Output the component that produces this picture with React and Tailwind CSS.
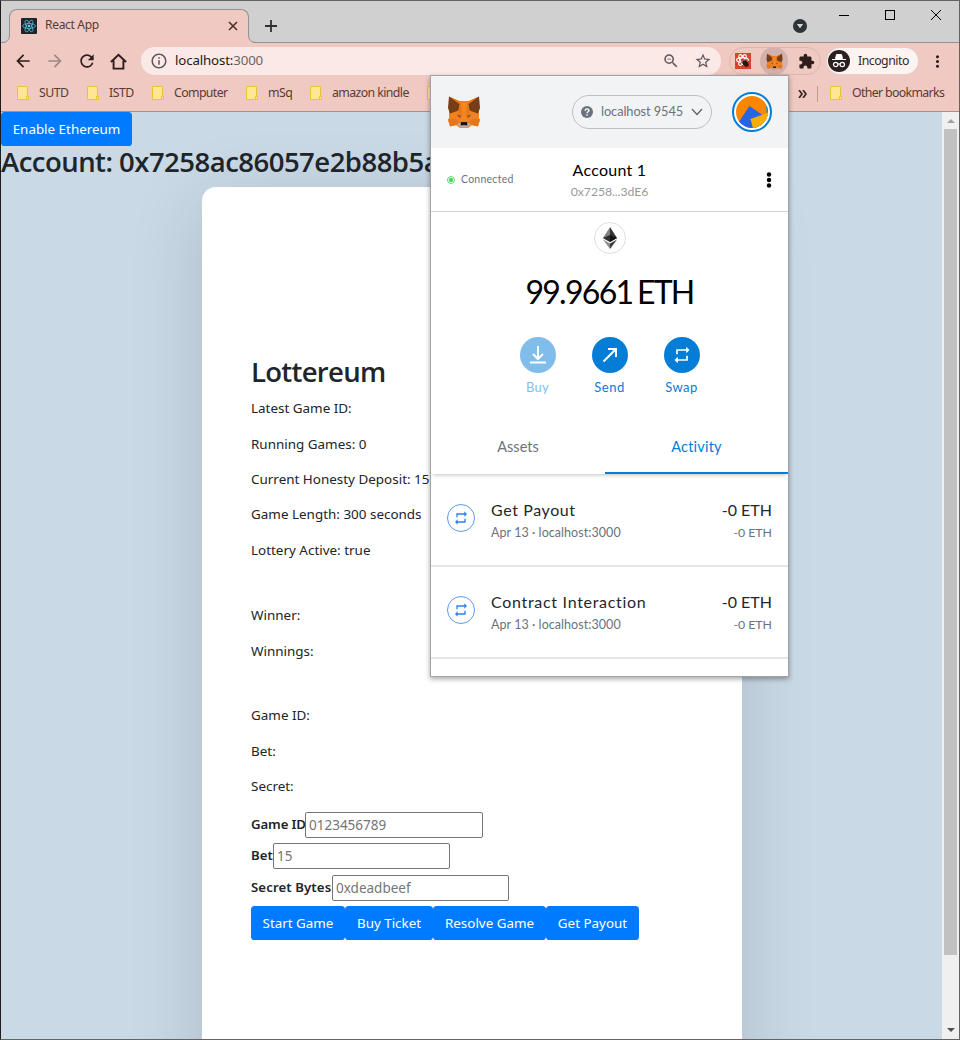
import React from "react";
import {
  MdArrowBack, MdArrowForward, MdRefresh, MdInfoOutline,
  MdZoomOut, MdStarBorder, MdExtension, MdMoreVert, MdRepeat,
} from "react-icons/md";

const Fox = ({ className }) => (
  <svg viewBox="0 0 34 32" className={className}>
    <path fill="#f08223" d="M2 13L11 5h12l9 8v9l1 2-2 6-6-1-4 3h-8l-4-3-6 1-2-6 1-2z" />
    <path fill="#763d16" d="M2 .5L13 6l-1.500 8.500L3 17.500 1 12z" />
    <path fill="#763d16" d="M32 .5L21 6l1.500 8.500L31 17.500l2-5.500z" />
    <path fill="#e4761b" d="M2 .5L13.500 5.500h7L32 .5 21 8.500l2 7-3 5h-6l-3-5 2-7z" />
    <path fill="#f6851b" d="M13.500 5.500h7l-1 9-.5 11h-4l-.5-11z" />
    <path fill="#e4761b" d="M1 23h8l3 3-2 3-7 1.500zM33 23h-8l-3 3 2 3 7 1.500z" />
    <path fill="#cd6116" d="M9 18l5 1.500-1 3zM25 18L20 19.500l1 3z" />
    <path fill="#c0ad9e" d="M10 28l4-1.500h6l4 1.500-4 3.500h-6z" />
    <path fill="#161616" d="M14 26h6l.5 3.200h-7z" />
    <path fill="#5a4a48" d="M10.500 19l3 1-.5 1.500zM23.500 19l-3 1 .5 1.500z" />
  </svg>
);

const Atom = ({ className }) => (
  <svg viewBox="0 0 16 16" className={className}>
    <rect width="16" height="16" rx="1" fill="#20232a" />
    <g fill="none" stroke="#53b9d3" strokeWidth=".8">
      <ellipse cx="8" cy="8" rx="6.5" ry="2.5" />
      <ellipse cx="8" cy="8" rx="6.5" ry="2.5" transform="rotate(60 8 8)" />
      <ellipse cx="8" cy="8" rx="6.5" ry="2.5" transform="rotate(120 8 8)" />
    </g>
    <circle cx="8" cy="8" r="1.3" fill="#61dafb" />
  </svg>
);

const DevTools = () => (
  <svg viewBox="0 0 16 16" className="size-4">
    <rect width="16" height="16" fill="#d8432f" />
    <g fill="none" stroke="#fff" strokeWidth="1.1">
      <ellipse cx="7.5" cy="7" rx="6" ry="2.4" />
      <ellipse cx="7.5" cy="7" rx="6" ry="2.4" transform="rotate(60 7.5 7)" />
      <ellipse cx="7.5" cy="7" rx="6" ry="2.4" transform="rotate(120 7.5 7)" />
    </g>
    <ellipse cx="10.5" cy="10.5" rx="2.6" ry="3.4" fill="#2b1512" transform="rotate(-35 10.5 10.5)" />
    <path d="M6 9l8 4M7 13l7-5M10 6l2 8" stroke="#2b1512" strokeWidth=".8" />
  </svg>
);

const Folder = () => (
  <svg viewBox="0 0 13 15" className="h-[15px] w-[13px] shrink-0">
    <path d="M1.500 .5h10v10h1v3h-11z" fill="#ffe694" stroke="#e9c535" />
    <path d="M10.500 13.500v-3h2" fill="none" stroke="#e9c535" />
  </svg>
);

const Bookmark = ({ label, className, text = "ml-[9px]" }) => (
  <div className={`flex shrink-0 items-center ${className}`}>
    <Folder />
    <span className={`text-[12.3px] whitespace-nowrap ${text}`}>{label}</span>
  </div>
);

const Browser = () => (
  <>
    <div className="flex h-[42px] shrink-0 items-end bg-[#d0d0d0] pl-2 shadow-[inset_0_-1px_0_#959191]">
      <div className="relative flex h-[34px] w-[240px] items-center rounded-t-lg border border-b-0 border-[#959191] bg-[#efc9c2] pr-[10px] pb-[2px] pl-[11px]">
        <Atom className="size-4" />
        <span className="ml-2 flex-1 text-[12.1px] tracking-[-0.350px] text-[#5c3a34]">React App</span>
        <svg viewBox="0 0 10 10" className="size-[10px]"><path d="M1 1l8 8M9 1L1 9" stroke="#4d2f2b" strokeWidth="1.6" /></svg>
        <svg viewBox="0 0 8 8" className="absolute bottom-0 -left-[8px] size-2"><path d="M8 0v8H0q7.500 0 7.500-8" fill="#efc9c2" /><path d="M0 7.500q7.500 0 7.500-7.500" fill="none" stroke="#959191" /></svg>
        <svg viewBox="0 0 8 8" className="absolute -right-[8px] bottom-0 size-2"><path d="M0 0v8h8Q.5 8 .5 0" fill="#efc9c2" /><path d="M8 7.500Q.5 7.500 .5 0" fill="none" stroke="#959191" /></svg>
      </div>
      <svg viewBox="0 0 12 12" className="mb-[11px] ml-4 size-3"><path d="M6 0v12M0 6h12" stroke="#2c3033" strokeWidth="1.800" /></svg>
      <div className="flex-1" />
      <svg viewBox="0 0 14 14" className="mr-[32px] mb-[10px] size-[14px]"><circle cx="7" cy="7" r="7" fill="#2f3438" /><path d="M3.800 5h6.400L7 9.300z" fill="#d8d8d8" /></svg>
      <div className="mr-[18px] flex items-center gap-[36px] pb-[23px]">
        <svg viewBox="0 0 10 10" className="size-[10px]"><path d="M0 5.500h10" stroke="#000" /></svg>
        <svg viewBox="0 0 10 10" className="size-[10px]"><rect x=".5" y=".5" width="9" height="9" fill="none" stroke="#000" /></svg>
        <svg viewBox="0 0 10 10" className="size-[10px]"><path d="M0 0l10 10M10 0L0 10" stroke="#000" /></svg>
      </div>
    </div>
    <div className="flex h-9 shrink-0 items-center bg-[#efc9c2] pr-[11px] pl-3 text-[#2e1d1b]">
      <MdArrowBack className="size-[20px] shrink-0" />
      <MdArrowForward className="ml-[12px] size-[20px] shrink-0 text-[#a18884]" />
      <MdRefresh className="ml-[12px] size-[20px] shrink-0" />
      <svg viewBox="0 0 18 18" className="mr-[3px] ml-[13px] size-[17px] shrink-0"><path d="M1 9.500L9 1.800l8 7.700M3.800 8v8.500h10.400V8" fill="none" stroke="#2e1d1b" strokeWidth="2" /></svg>
      <div className="ml-[11px] flex h-7 w-[580px] shrink-0 items-center rounded-full bg-[#fae9e6] pr-[9px] pl-[9px] text-[#5f5655]">
        <MdInfoOutline className="size-[18px]" />
        <span className="ml-[7px] flex-1 text-[13.300px] tracking-[-0.150px] text-[#6c6462]"><span className="text-[#231918]">localhost:</span>3000</span>
        <MdZoomOut className="size-[18px]" />
        <MdStarBorder className="ml-[14px] size-[18px]" />
      </div>
      <div className="ml-2 flex h-7 w-[92px] shrink-0 items-center rounded-full border border-[#dcb7b1] pl-[5px]">
        <DevTools />
        <span className="ml-[9px] flex size-7 items-center justify-center rounded-full bg-[#d2b1ac]"><Fox className="size-[17px]" /></span>
        <MdExtension className="ml-[10px] size-[17px] text-[#2e1d1b]" />
      </div>
      <div className="ml-[6px] flex h-[26px] w-[91px] shrink-0 items-center rounded-full bg-[#fdf4f2] pl-[1px] ring-1 ring-[#e5cfcb]">
        <svg viewBox="0 0 22 22" className="size-[22px]">
          <circle cx="11" cy="11" r="11" fill="#29201f" />
          <path d="M7.500 8.500l1-4h5l1 4zM4 9.500h14" fill="#fff" stroke="#fff" strokeWidth="1" />
          <g fill="none" stroke="#fff" strokeWidth="1.200"><circle cx="7.700" cy="14.500" r="2.200" /><circle cx="14.300" cy="14.500" r="2.200" /><path d="M9.900 14h2.200" /></g>
        </svg>
        <span className="ml-[8px] text-[12.300px] tracking-[-0.500px] text-[#382725]">Incognito</span>
      </div>
      <MdMoreVert className="ml-[10px] size-[19px] shrink-0" />
    </div>
    <div className="flex h-[33px] shrink-0 items-center border-b border-[#a98f8a] bg-[#efc9c2] pb-[3px] pl-[15px] text-[#5c3a34]">
      <Bookmark label="SUTD" className="w-[70px]" text="ml-[10px] tracking-[-0.500px]" />
      <Bookmark label="ISTD" className="w-[65px]" text="ml-[10px] tracking-[-0.500px]" />
      <Bookmark label="Computer" className="w-[94px]" text="ml-[10px] tracking-[-0.600px]" />
      <Bookmark label="mSq" className="w-[64px]" text="ml-[10px] tracking-[-0.500px]" />
      <Bookmark label="amazon kindle" className="w-[117px]" text="ml-[10px] tracking-[-0.580px]" />
      <Folder />
      <div className="flex-1" />
      <svg viewBox="0 0 9 8" className="h-2 w-[9px]"><path d="M1 0l3 4-3 4M5 0l3 4-3 4" fill="none" stroke="#3b2522" strokeWidth="1.700" /></svg>
      <div className="mr-[11px] ml-[10px] h-4 w-px bg-[#bd9a94]" />
      <Bookmark label="Other bookmarks" className="w-[130px]" text="ml-[10px] tracking-[-0.640px]" />
    </div>
  </>
);

const Button = ({ children, className }) => (
  <button className={`h-[34px] rounded-[3.600px] bg-[#007bff] text-center text-[13.400px] whitespace-nowrap text-white ${className}`}>{children}</button>
);
const Line = ({ children, className = "mb-[14px]" }) => (
  <p className={`h-[21.400px] text-[13.450px] leading-[21.400px] whitespace-nowrap ${className}`}>{children}</p>
);
const Field = ({ label, hint, width, box = "w-[177px]" }) => (
  <div className="flex h-[31.500px] items-center">
    <label className={`text-[13.200px] font-semibold whitespace-nowrap ${width}`}>{label}</label>
    <input placeholder={hint} className={`h-[26px] rounded-[2px] border border-[#767676] bg-white px-[3px] text-[13.500px] placeholder:text-[#757575] ${box}`} />
  </div>
);

const Page = () => (
  <div className="flex min-h-0 flex-1">
    <main className="flex min-w-0 flex-1 flex-col items-start overflow-hidden bg-[#c9d9e6] text-[#212529]">
      <Button className="w-[131px] shrink-0">Enable Ethereum</Button>
      <h2 className="mb-[6px] h-[35px] shrink-0 font-['Open_Sans',sans-serif] text-[27.500px] leading-[32px] font-semibold tracking-[-0.520px] whitespace-nowrap">Account: 0x7258ac86057e2b88b5a</h2>
      <section className="ml-[201px] h-[1000px] w-[540px] shrink-0 rounded-[14px] bg-white px-[49px] pt-[168px] shadow-[0_14px_76px_rgba(0,0,0,0.14)]">
        <h2 className="mb-[9.300px] h-[34px] font-['Open_Sans',sans-serif] text-[27.500px] leading-[33px] font-semibold tracking-[-0.700px]">Lottereum</h2>
        <Line>Latest Game ID:</Line>
        <Line>Running Games: 0</Line>
        <Line>Current Honesty Deposit: 15</Line>
        <Line>Game Length: 300 seconds</Line>
        <Line>Lottery Active: true</Line>
        <Line className="mt-[43.900px] mb-[14px]">Winner:</Line>
        <Line>Winnings:</Line>
        <Line className="mt-[43.500px] mb-[14px]">Game ID:</Line>
        <Line>Bet:</Line>
        <Line className="mb-[11.300px]">Secret:</Line>
        <Field label="Game ID" hint="0123456789" width="w-[54px] tracking-[-0.100px]" box="w-[178px]" />
        <Field label="Bet" hint="15" width="w-[22px]" />
        <Field label="Secret Bytes" hint="0xdeadbeef" width="w-[81px] tracking-[0.100px]" />
        <div className="mt-[3px] flex">
          <Button className="w-[94px]">Start Game</Button>
          <Button className="w-[88px]">Buy Ticket</Button>
          <Button className="w-[113px]">Resolve Game</Button>
          <Button className="w-[93px]">Get Payout</Button>
        </div>
      </section>
    </main>
    <div className="flex w-[17px] shrink-0 flex-col items-center bg-[#f0f0f0]">
      <svg viewBox="0 0 17 17" className="size-[17px] shrink-0"><path d="M5 11h8L9 7z" fill="#a3a3a3" /></svg>
      <div className="h-[826px] w-[13px] bg-[#c1c1c1]" />
      <div className="flex-1" />
      <svg viewBox="0 0 17 17" className="size-[17px] shrink-0"><path d="M5 6h8l-4 4z" fill="#505050" /></svg>
    </div>
  </div>
);

const Action = ({ label, faded, text, children }) => (
  <div className={`flex w-[72px] flex-col items-center ${faded ? "opacity-50" : ""}`}>
    <span className="flex size-9 items-center justify-center rounded-full bg-[#037dd6] text-white">{children}</span>
    <span className={`mt-[5px] text-[13px] leading-[18px] text-[#037dd6] ${text}`}>{label}</span>
  </div>
);

const Activity = ({ title, className = "", text }) => (
  <div className={`flex h-[92px] shrink-0 items-start border-b-2 border-[#e4e5e7] px-4 pt-[24px] ${className}`}>
    <span className="mt-[5px] flex size-7 items-center justify-center rounded-full border border-[#5a9bf0] text-[#2f80ed]"><MdRepeat className="size-[16px]" /></span>
    <div className="ml-4 flex-1">
      <div className={`text-[16px] leading-[22px] text-[#24272a] ${text}`}>{title}</div>
      <div className="text-[12.500px] leading-[24px] tracking-[0.060px] text-[#6a737d]">Apr 13 · localhost:3000</div>
    </div>
    <div className="text-right">
      <div className="text-[16px] leading-[22px] text-[#24272a]">-0 ETH</div>
      <div className="text-[12.300px] leading-[24px] text-[#6a737d]">-0 ETH</div>
    </div>
  </div>
);

const Wallet = () => (
  <aside className="absolute top-[74px] left-[429px] flex h-[602px] w-[359px] flex-col overflow-hidden border border-[#a2a2a2] bg-white font-[Lato,sans-serif] shadow-[0_2px_5px_rgba(0,0,0,0.35)]">
    <header className="flex h-[72px] shrink-0 items-center bg-[#f2f3f4] px-4">
      <Fox className="h-8 w-[34px]" />
      <div className="flex-1" />
      <div className="mr-5 flex h-[34px] w-[140px] items-center rounded-full border border-[#bbc0c5] px-[8px]">
        <svg viewBox="0 0 12 12" className="size-3 shrink-0"><circle cx="6" cy="6" r="6" fill="#6a737d" /><path d="M4.200 4.700C4.200 2.300 7.900 2.400 7.900 4.500 7.900 5.800 6 5.800 6 7.200M6 8.200v1.500" fill="none" stroke="#fff" strokeWidth="1.400" /></svg>
        <span className="ml-[8px] flex-1 text-[12.800px] tracking-[-0.080px] whitespace-nowrap text-[#6a737d]">localhost 9545</span>
        <svg viewBox="0 0 12 8" className="h-2 w-3 shrink-0"><path d="M1 1l5 5.500L11 1" fill="none" stroke="#5b6067" strokeWidth="1.200" /></svg>
      </div>
      <svg viewBox="0 0 40 40" className="size-10">
        <circle cx="20" cy="20" r="19" fill="#fff" stroke="#037dd6" strokeWidth="2" />
        <clipPath id="avatar"><circle cx="20" cy="20" r="16" /></clipPath>
        <g clipPath="url(#avatar)"><path fill="#fc8600" d="M0 0h40v40H0z" /><path fill="#2565e2" d="M17.500 14L32 24l-4 16H8L6 31z" /><path fill="#1888bd" d="M34 14l4 1v8l-3-1z" /><path fill="#f3ae05" d="M18.500 27L40 19v21H22z" /></g>
      </svg>
    </header>
    <div className="grid h-16 shrink-0 grid-cols-[110px_1fr_110px] items-center border-b border-[#d2d6d9] px-4">
      <div className="flex items-center text-[10.500px] text-[#6a737d]">
        <svg viewBox="0 0 8 8" className="mr-[6px] size-2"><circle cx="4" cy="4" r="3.500" fill="#fff" stroke="#61d77a" /><circle cx="4" cy="4" r="2.200" fill="#4cd964" /></svg>
        <span className="tracking-[0.250px]">Connected</span>
      </div>
      <div className="pt-[2px] text-center">
        <div className="text-[16px] leading-[22px] tracking-[0.250px] text-black">Account 1</div>
        <div className="text-[12.300px] leading-[21px] tracking-[-0.100px] text-[#989a9b]">0x7258...3dE6</div>
      </div>
      <svg viewBox="0 0 6 18" className="h-[18px] w-[6px] justify-self-end"><circle cx="3" cy="3.500" r="2.200" /><circle cx="3" cy="9" r="2.200" /><circle cx="3" cy="14.500" r="2.200" /></svg>
    </div>
    <div className="flex shrink-0 flex-col items-center pt-[10px]">
      <span className="flex size-8 items-center justify-center rounded-full border border-[#dcdfe2]">
        <svg viewBox="0 0 14 22" className="h-[22px] w-[14px]"><path fill="#828384" d="M7 0v15L0 11z" /><path fill="#343434" d="M7 0v15l7-4z" /><path fill="#2f3030" d="M0 11l7-3v7z" /><path fill="#131313" d="M14 11L7 8v7z" /><path fill="#8c8c8c" d="M0 12.500l7 4V22z" /><path fill="#3c3c3b" d="M14 12.500l-7 4V22z" /></svg>
      </span>
      <div className="mt-[15px] h-[45px] text-[32px] leading-[45px] tracking-[-1.700px] [word-spacing:-2px] whitespace-nowrap text-black">99.9661 ETH</div>
      <div className="mt-[23px] flex">
        <Action label="Buy" text="tracking-[0.200px]" faded><svg viewBox="0 0 18 20" className="h-5 w-[18px]"><path d="M9 1v12M4 9l5 5 5-5M1 17.500h16" fill="none" stroke="#fff" strokeWidth="2" /></svg></Action>
        <Action label="Send" text="tracking-[0.500px]"><svg viewBox="0 0 16 16" className="size-4"><path d="M1.500 14.500L14 2M6 2h8v8" fill="none" stroke="#fff" strokeWidth="2" /></svg></Action>
        <Action label="Swap" text="tracking-[0.500px]"><MdRepeat className="size-[20px]" /></Action>
      </div>
    </div>
    <div className="mt-[22px] grid h-[56px] shrink-0 grid-cols-[174px_1fr] text-center text-[14.500px] leading-[50px] shadow-[0_3px_4px_-2px_rgba(0,0,0,0.25)]">
      <div className="pt-[4px] text-[#6a737d]">Assets</div>
      <div className="border-b-2 border-[#037dd6] pt-[4px] tracking-[0.200px] text-[#037dd6]">Activity</div>
    </div>
    <Activity title="Get Payout" className="mt-px" text="tracking-[0.600px]" />
    <Activity title="Contract Interaction" text="tracking-[0.700px]" />
  </aside>
);

export default function App() {
  return (
    <div className="relative flex h-[1040px] w-[960px] flex-col overflow-hidden border border-[#656260] border-l-[#201b1c] font-['Noto_Sans',sans-serif]">
      <Browser />
      <Page />
      <Wallet />
    </div>
  );
}
